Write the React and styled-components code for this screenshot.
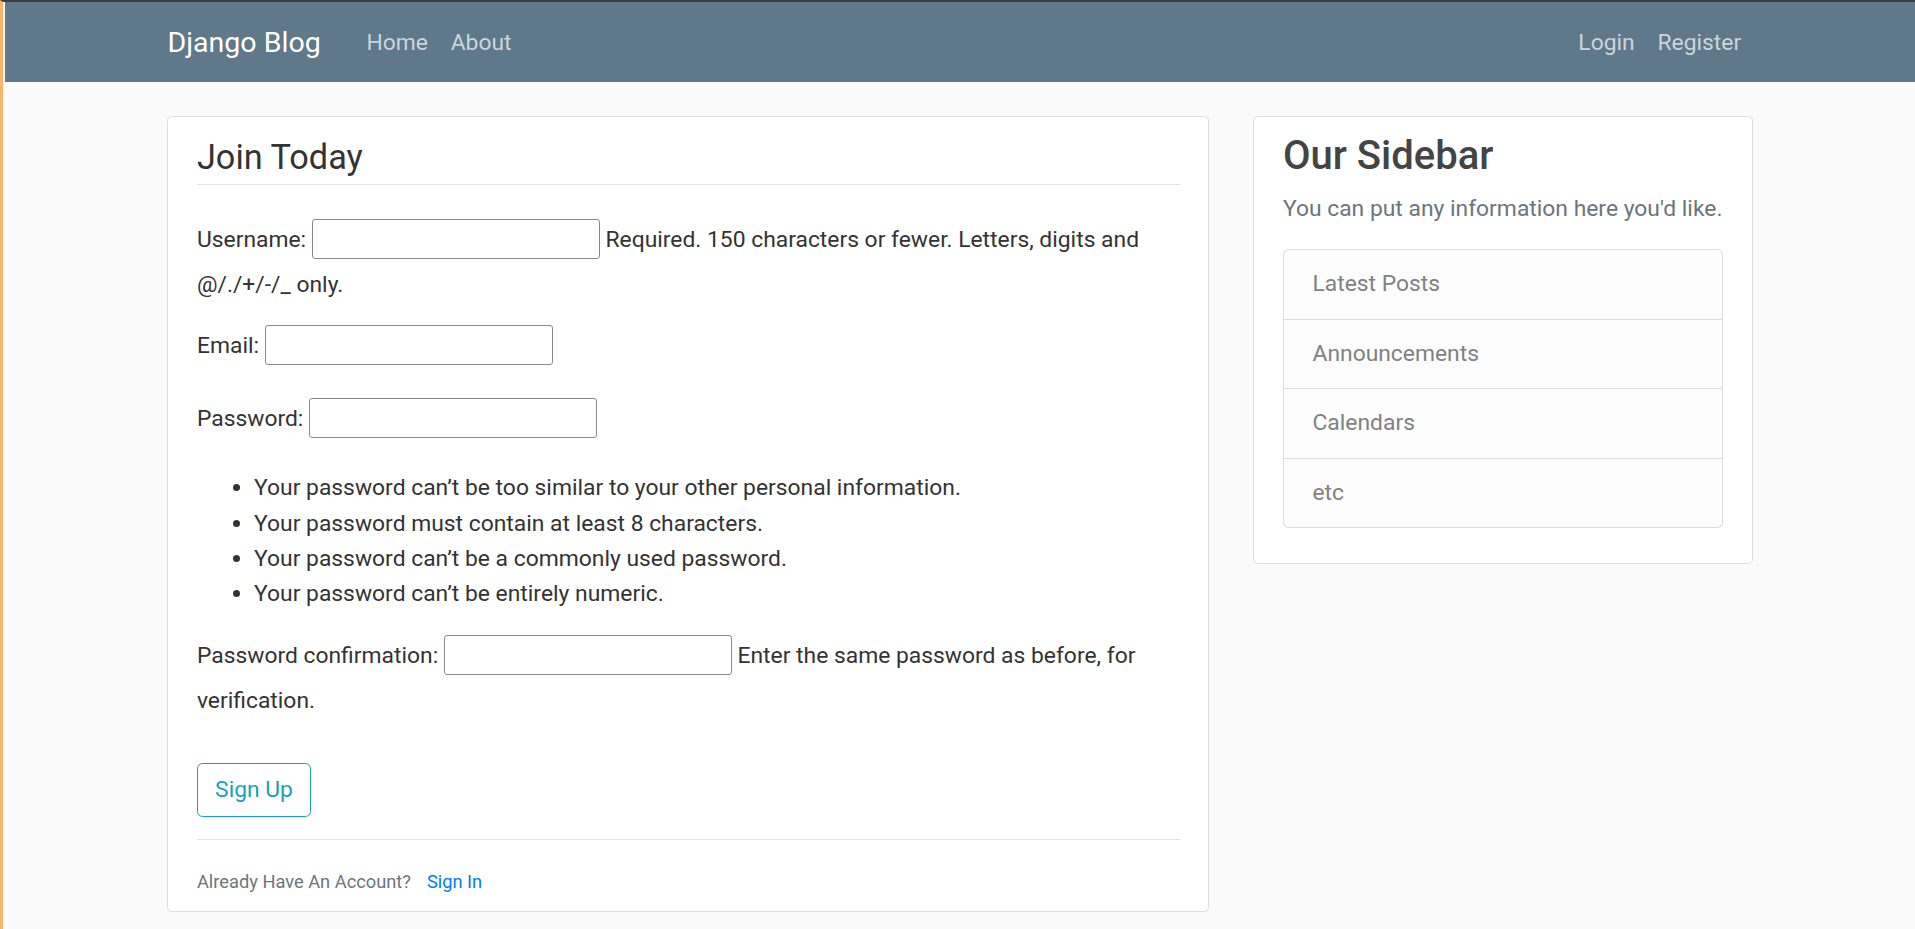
import React from "react";
import styled, { createGlobalStyle } from "styled-components";

const GlobalStyle = createGlobalStyle`
  html, body { margin: 0; padding: 0; }
  body {
    background: #fafafa;
    color: #333333;
    font-family: Roboto, "Liberation Sans", Arial, sans-serif;
    font-size: 22.85px;
    line-height: 1.5;
  }
  *, *::before, *::after { box-sizing: border-box; }
`;

const Frame = styled.div`
  min-height: 100vh;
  border-top: 2px solid #3d3d3d;
  border-left: 3px solid #f9b46b;
  padding-left: 2px;
  background: #fafafa;
`;

const NavBar = styled.header`
  background-color: #5f788a;
  padding: 12.6px 0 10.2px;
`;

const Container = styled.div`
  width: 1628px;
  margin: 0 auto;
  padding: 0 21.42px;
`;

const NavInner = styled(Container)`
  display: flex;
  align-items: center;
`;

const Brand = styled.a`
  font-size: 28.56px;
  line-height: 1.5;
  padding: 7.14px 0;
  margin-right: 34.27px;
  color: #ffffff;
  text-decoration: none;
  white-space: nowrap;
`;

const NavGroup = styled.nav`
  display: flex;
  align-items: center;
  margin-left: ${(p) => (p.$right ? "auto" : "0")};
`;

const NavLink = styled.a`
  padding: 11.42px;
  color: #cbd5db;
  text-decoration: none;
  font-size: 22.85px;
  line-height: 1.5;
`;

const Main = styled.main`
  padding-top: 34px;
`;

const Row = styled.div`
  display: grid;
  grid-template-columns: 1042px 1fr;
  column-gap: 44px;
  align-items: start;
`;

const Card = styled.section`
  background: #ffffff;
  padding: 15.28px 28.56px 12.5px;
  border: 1px solid #dddddd;
  border-radius: 4.3px;
  margin-bottom: 28.56px;
`;

const Fieldset = styled.fieldset`
  border: 0;
  margin: 0 0 22px;
  padding: 0;
  min-width: 0;
`;

const Legend = styled.legend`
  display: block;
  width: 100%;
  padding: 0;
  font-size: 34.27px;
  line-height: 1.5;
  color: #333333;
  border-bottom: 1px solid #dee2e6;
  margin-bottom: 34.27px;
`;

const FieldRow = styled.p`
  margin: 0 0 22.85px;
  color: #333333;
`;

const Label = styled.label`
  color: #333333;
`;

const TextInput = styled.input`
  width: 288px;
  height: 40px;
  margin: 0 0 9.5px;
  padding: 0 3px;
  font: inherit;
  line-height: normal;
  vertical-align: baseline;
  border: 1px solid #8a8a8e;
  border-radius: 3px;
  background: #ffffff;
`;

const HelpList = styled.ul`
  margin: 0 0 22.85px;
  padding-left: 57.1px;
  list-style: disc;
  line-height: 35.4px;
`;

const Button = styled.button`
  font: inherit;
  font-size: 22.85px;
  line-height: 1.5;
  padding: 8.57px 17.14px;
  color: #17a2b8;
  background: transparent;
  border: 1px solid #17a2b8;
  border-radius: 5.7px;
  cursor: pointer;
`;

const FormGroup = styled.div`
  margin-bottom: 22.85px;
`;

const Footer = styled.div`
  border-top: 1px solid #dee2e6;
  padding-top: 24px;
`;

const Small = styled.small`
  font-size: 18.28px;
  color: #6c757d;
`;

const InlineLink = styled.a`
  margin-left: 11.42px;
  color: #007bff;
  text-decoration: none;
`;

const SideTitle = styled.h3`
  margin: 0 0 11.42px;
  font-size: 40px;
  font-weight: 500;
  line-height: 1.2;
  color: #444444;
`;

const Muted = styled.p`
  margin: 0 0 23.5px;
  color: #6c757d;
`;

const ListGroup = styled.ul`
  list-style: none;
  margin: 0 0 22.85px;
  padding: 0;
  display: flex;
  flex-direction: column;
`;

const ListItem = styled.li`
  padding: 17.1px 28.56px;
  margin-bottom: -1px;
  background: #fdfdfe;
  color: #818182;
  border: 1px solid rgba(0, 0, 0, 0.125);
  &:first-child {
    border-top-left-radius: 5.7px;
    border-top-right-radius: 5.7px;
  }
  &:last-child {
    margin-bottom: 0;
    border-bottom-left-radius: 5.7px;
    border-bottom-right-radius: 5.7px;
  }
`;

const passwordRules = [
  "Your password can’t be too similar to your other personal information.",
  "Your password must contain at least 8 characters.",
  "Your password can’t be a commonly used password.",
  "Your password can’t be entirely numeric.",
];

const sidebarItems = ["Latest Posts", "Announcements", "Calendars", "etc"];

export default function App() {
  return (
    <>
      <GlobalStyle />
      <Frame>
        <NavBar>
          <NavInner>
            <Brand href="#">Django Blog</Brand>
            <NavGroup>
              <NavLink href="#">Home</NavLink>
              <NavLink href="#">About</NavLink>
            </NavGroup>
            <NavGroup $right>
              <NavLink href="#">Login</NavLink>
              <NavLink href="#">Register</NavLink>
            </NavGroup>
          </NavInner>
        </NavBar>
        <Main>
          <Container>
            <Row>
              <Card>
                <form onSubmit={(e) => e.preventDefault()}>
                  <Fieldset>
                    <Legend>Join Today</Legend>
                    <FieldRow>
                      <Label htmlFor="id_username">Username:</Label>{" "}
                      <TextInput id="id_username" type="text" /> Required. 150
                      characters or fewer. Letters, digits and @/./+/-/_ only.
                    </FieldRow>
                    <FieldRow>
                      <Label htmlFor="id_email">Email:</Label>{" "}
                      <TextInput id="id_email" type="email" />
                    </FieldRow>
                    <FieldRow>
                      <Label htmlFor="id_password1">Password:</Label>{" "}
                      <TextInput id="id_password1" type="password" />
                    </FieldRow>
                    <HelpList>
                      {passwordRules.map((r) => (
                        <li key={r}>{r}</li>
                      ))}
                    </HelpList>
                    <FieldRow>
                      <Label htmlFor="id_password2">Password confirmation:</Label>{" "}
                      <TextInput id="id_password2" type="password" /> Enter the
                      same password as before, for verification.
                    </FieldRow>
                  </Fieldset>
                  <FormGroup>
                    <Button type="submit">Sign Up</Button>
                  </FormGroup>
                </form>
                <Footer>
                  <Small>
                    Already Have An Account?{" "}
                    <InlineLink href="#">Sign In</InlineLink>
                  </Small>
                </Footer>
              </Card>
              <Card>
                <SideTitle>Our Sidebar</SideTitle>
                <Muted>You can put any information here you'd like.</Muted>
                <ListGroup>
                  {sidebarItems.map((i) => (
                    <ListItem key={i}>{i}</ListItem>
                  ))}
                </ListGroup>
              </Card>
            </Row>
          </Container>
        </Main>
      </Frame>
    </>
  );
}
